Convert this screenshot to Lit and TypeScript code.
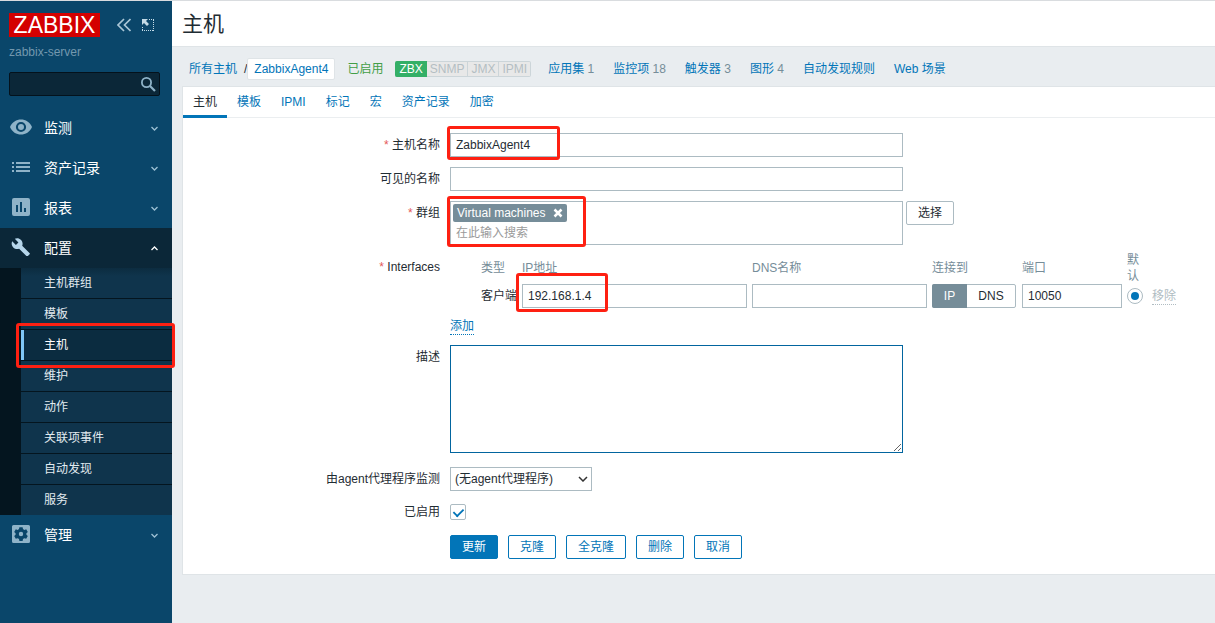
import { LitElement, html, css, svg, nothing } from "lit";
import { customElement, property } from "lit/decorators.js";
import { classMap } from "lit/directives/class-map.js";

const base = css`
  * {
    box-sizing: border-box;
  }
  a {
    color: #0275b8;
    text-decoration: none;
  }
  button,
  input,
  select,
  textarea {
    font: inherit;
    color: inherit;
    margin: 0;
  }
  ul {
    list-style: none;
    margin: 0;
    padding: 0;
  }
  .mark {
    position: absolute;
    border: 3px solid #fe2012;
    border-radius: 3px;
    pointer-events: none;
    z-index: 2;
  }
`;

const icons: Record<string, unknown> = {
  eye: svg`<path fill-rule="evenodd" d="M0 9C2 4 6.500 1.500 11 1.500S20 4 22 9C20 14 15.500 16.500 11 16.500S2 14 0 9zM11 3.900a5.100 5.100 0 1 0 0 10.200a5.100 5.100 0 1 0 0-10.200zM11 6a3 3 0 1 1 0 6a3 3 0 1 1 0-6z"/>`,
  list: svg`<path d="M2 4h2v2H2zM6 4h14v2H6zM2 8h2v2H2zM6 8h14v2H6zM2 12h2v2H2zM6 12h14v2H6z"/>`,
  chart: svg`<path fill-rule="evenodd" d="M4 0h14a2 2 0 0 1 2 2v14a2 2 0 0 1-2 2H4a2 2 0 0 1-2-2V2a2 2 0 0 1 2-2zM6 7v7h2V7zM10 4v10h2V4zM14 10v4h2v-4z"/>`,
  wrench: svg`<path d="M19.700 15.200l-7.500-7.500c.8-1.900.4-4.200-1.200-5.800C9.300.2 6.800-.1 4.800.8l3.600 3.600-2.500 2.500L2.200 3.300c-1 2-.6 4.500 1.100 6.200 1.600 1.600 3.900 2 5.800 1.200l7.500 7.500c.3.300.8.300 1.100 0l1.900-1.900c.4-.3.400-.8.100-1.100z"/>`,
  gear: svg`<path fill-rule="evenodd" d="M3.500 0h15A1.500 1.500 0 0 1 20 1.500v15a1.500 1.500 0 0 1-1.500 1.500h-15A1.500 1.500 0 0 1 2 16.500v-15A1.500 1.500 0 0 1 3.500 0zM9.400 2.200l-.4 1.900-1.300.8-1.900-.6-1.600 2.700 1.400 1.300v1.500l-1.400 1.300 1.600 2.700 1.900-.6 1.300.8.4 1.900h3.200l.4-1.900 1.300-.8 1.900.6 1.600-2.700-1.400-1.300V8.300l1.400-1.300-1.600-2.700-1.900.6-1.300-.8-.4-1.900zM11 6.800a2.200 2.200 0 1 1 0 4.400a2.200 2.200 0 1 1 0-4.400z"/>`,
};

interface Section {
  icon: string;
  label: string;
  items?: string[];
}

const sections: Section[] = [
  { icon: "eye", label: "监测" },
  { icon: "list", label: "资产记录" },
  { icon: "chart", label: "报表" },
  {
    icon: "wrench",
    label: "配置",
    items: ["主机群组", "模板", "主机", "维护", "动作", "关联项事件", "自动发现", "服务"],
  },
  { icon: "gear", label: "管理" },
];

@customElement("side-nav")
export class SideNav extends LitElement {
  @property() current = "主机";

  static styles = [
    base,
    css`
      :host {
        display: block;
        flex: none;
        width: 172px;
        background: #0a466a;
        color: #fff;
      }
      .head {
        display: flex;
        align-items: center;
        padding: 12px 0 0 9px;
      }
      .logo {
        width: 91px;
        height: 24px;
        margin-right: 17px;
        background: #d40000;
        color: #fff;
        font-size: 23px;
        line-height: 24px;
        text-align: center;
      }
      .tool {
        display: flex;
        border: 0;
        padding: 0;
        background: none;
        margin-right: 11px;
      }
      .server {
        margin: 6px 9px 0;
        line-height: 18px;
        color: #7398ae;
      }
      .search {
        display: flex;
        align-items: center;
        height: 24px;
        margin: 11px 12px 12px 9px;
        padding-right: 3px;
        border: 1px solid #04121c;
        border-radius: 2px;
        background: #0b2738;
      }
      .search input {
        flex: 1;
        min-width: 0;
        border: 0;
        outline: 0;
        background: none;
      }
      .search button {
        display: flex;
        padding: 0;
        border: 0;
        background: none;
      }
      .section {
        display: flex;
        align-items: center;
        height: 40px;
        padding: 0 14px 0 10px;
        color: #fff;
        font-size: 14px;
      }
      .icon {
        margin-bottom: 2px;
        fill: #8fb3c8;
      }
      .name {
        flex: 1;
        padding-left: 12px;
      }
      .arrow {
        fill: none;
        stroke: #9dc0d4;
      }
      .open {
        background: #0b2738;
      }
      .open .icon {
        fill: #b5d5ea;
      }
      .open .arrow {
        stroke: #fff;
      }
      .sub {
        padding-left: 21px;
        background: #04151f;
      }
      .sub li {
        position: relative;
      }
      .sub li + li {
        border-top: 1px solid #04151f;
      }
      .item {
        display: block;
        height: 30px;
        line-height: 30px;
        padding-left: 20px;
        border-left: 3px solid transparent;
        background: #0f344c;
        color: #e2ebf0;
      }
      .sub li:first-child .item {
        background: linear-gradient(#0c2c40, #0f344c 8px);
      }
      .item.current {
        border-left-color: #7fc6f5;
        background: #0b2c40;
        color: #fff;
      }
      .mark {
        inset: -7px -3px -8px -5px;
      }
    `,
  ];

  render() {
    return html`
      <div class="head">
        <a class="logo" href="#">ZABBIX</a>
        <button class="tool" aria-label="收起">
          <svg width="14" height="14" fill="none" stroke="#a9c6d6" stroke-width="1.700">
            <path d="M7 1L1 7l6 6M13.500 1l-6 6 6 6" />
          </svg>
        </button>
        <button class="tool" aria-label="隐藏">
          <svg width="12" height="12" fill="#c3dbe7">
            <path d="M0 0h6L4 2l3 3-2 2-3-3-2 2z" />
            <path
              fill="none"
              stroke="#c3dbe7"
              stroke-dasharray="1 1"
              d="M7 .5h5M11.500 1v11M11 11.500H0M.5 11V7"
            />
          </svg>
        </button>
      </div>
      <div class="server">zabbix-server</div>
      <form class="search" role="search">
        <input type="text" aria-label="搜索" />
        <button type="button" aria-label="搜索">
          <svg width="15" height="15" fill="none" stroke="#8fb3c8">
            <circle cx="5.500" cy="5.500" r="4.600" stroke-width="1.800" />
            <path d="M9 9l5 5" stroke-width="2.200" />
          </svg>
        </button>
      </form>
      <nav>
        ${sections.map(
          (s) => html`
            <a class=${classMap({ section: true, open: !!s.items })} href="#">
              <svg class="icon" width="22" height="18">${icons[s.icon]}</svg>
              <span class="name">${s.label}</span>
              <svg class="arrow" width="7" height="5" stroke-width="1.300">
                <path d=${s.items ? "M.5 4L3.500 1l3 3" : "M.5 1l3 3 3-3"} />
              </svg>
            </a>
            ${s.items
              ? html`<ul class="sub">
                  ${s.items.map((i) => {
                    const current = i === this.current;
                    return html`<li>
                      <a class=${classMap({ item: true, current })} href="#">${i}</a>
                      ${current ? html`<div class="mark"></div>` : nothing}
                    </li>`;
                  })}
                </ul>`
              : nothing}
          `,
        )}
      </nav>
    `;
  }
}

@customElement("host-form")
export class HostForm extends LitElement {
  static styles = [
    base,
    css`
      :host {
        display: block;
        border: 1px solid #dfe4e7;
        border-right: 0;
        background: #fff;
      }
      .tabs {
        display: flex;
        border-bottom: 1px solid #ebeef0;
      }
      .tabs a {
        height: 30px;
        padding: 0 10px;
        line-height: 30px;
      }
      .tabs .active {
        height: 31px;
        margin-bottom: -1px;
        border-bottom: 3px solid #0275b8;
        color: #1f2c33;
      }
      form {
        padding: 10px 0;
      }
      .row {
        display: grid;
        grid-template-columns: calc(25% - 1px) minmax(0, 1fr);
        column-gap: 10px;
        padding: 5px 0;
      }
      .label {
        line-height: 24px;
        text-align: right;
      }
      .required::before {
        content: "* ";
        color: #e45959;
      }
      .field {
        display: flex;
        gap: 3px;
        position: relative;
        align-items: flex-start;
      }
      .box {
        width: 100%;
        height: 24px;
        padding: 0 5px;
        border: 1px solid #acbbc2;
        border-radius: 0;
        background: #fff;
        outline: 0;
      }
      .wide {
        width: 453px;
      }
      .multi {
        height: 44px;
        padding: 2px;
      }
      .tag {
        display: inline-flex;
        align-items: center;
        gap: 7px;
        height: 18px;
        padding: 0 4px;
        border-radius: 2px;
        background: #768d99;
        color: #fff;
      }
      .tag button {
        display: flex;
        padding: 0;
        border: 0;
        background: none;
      }
      .multi input {
        display: block;
        width: 100%;
        height: 20px;
        padding: 2px 3px 0;
        border: 0;
        outline: 0;
      }
      ::placeholder {
        color: #9a9a9a;
        opacity: 1;
      }
      .btn {
        height: 24px;
        padding: 1px 11px 0;
        border: 1px solid #0275b8;
        border-radius: 2px;
        background: #fff;
        color: #0275b8;
        line-height: 21px;
      }
      .btn.plain {
        border-color: #acbbc2;
        color: #1f2c33;
      }
      .btn.primary {
        background: #0275b8;
        color: #fff;
      }
      .interfaces {
        padding: 0 0 5px;
      }
      .interfaces .label {
        padding-top: 5px;
      }
      .stack {
        position: relative;
      }
      table {
        table-layout: fixed;
        width: 727px;
        border-collapse: collapse;
      }
      .c-type {
        width: 72px;
      }
      .c-ip {
        width: 230px;
      }
      .c-dns {
        width: 180px;
      }
      .c-connect {
        width: 90px;
      }
      .c-port {
        width: 105px;
      }
      .c-small {
        width: 25px;
      }
      th {
        height: 34px;
        padding: 1px 5px 0 0;
        color: #768d99;
        font-weight: 400;
        line-height: 16px;
        text-align: left;
        white-space: nowrap;
      }
      td {
        padding: 0 5px 0 0;
        white-space: nowrap;
      }
      th:first-child,
      td:first-child {
        padding-right: 0;
        padding-left: 31px;
      }
      th.default {
        padding-right: 9px;
        white-space: normal;
      }
      td:last-child {
        padding: 0;
      }
      .segments {
        display: flex;
        width: 84px;
        height: 24px;
        border: 1px solid #acbbc2;
        border-radius: 2px;
        line-height: 22px;
        text-align: center;
      }
      .segments input {
        position: absolute;
        opacity: 0;
      }
      .segments label {
        flex: 0 0 35px;
        margin: -1px 0 -1px -1px;
        padding: 1px 0;
        border-radius: 2px 0 0 2px;
      }
      .segments label:last-child {
        flex: 1;
        margin-left: 0;
      }
      .segments input:checked + label {
        background: #768d99;
        color: #fff;
      }
      .round,
      .check {
        display: grid;
        place-items: center;
        appearance: none;
        width: 16px;
        height: 16px;
        border: 1px solid #acbbc2;
        background: #fff;
      }
      .round {
        border-radius: 50%;
      }
      .round:checked::after {
        content: "";
        width: 8px;
        height: 8px;
        border-radius: 50%;
        background: #0275b8;
      }
      .check {
        border-radius: 2px;
        margin-top: 3px;
      }
      .check:checked::after {
        content: "";
        width: 9px;
        height: 5px;
        margin-bottom: 2px;
        border: solid #0275b8;
        border-width: 0 0 2px 2px;
        transform: rotate(-45deg) scale(0.9);
      }
      .dotted {
        display: inline-block;
        border-bottom: 1px dotted currentColor;
        line-height: 16px;
      }
      .off {
        color: #b0bcc2;
      }
      .add {
        margin-top: 10px;
      }
      textarea {
        display: block;
        height: 108px;
        padding: 4px 5px;
        border: 1px solid #02659f;
        outline: 0;
        margin-bottom: 4px;
      }
      select {
        appearance: none;
        width: 142px;
        height: 24px;
        padding: 0 4px;
        border: 1px solid #acbbc2;
        border-radius: 0;
        background: #fff
          url("data:image/svg+xml,%3Csvg xmlns='http://www.w3.org/2000/svg' width='10' height='6' fill='none' stroke='%23333' stroke-width='1.5'%3E%3Cpath d='M1 1l4 4 4-4'/%3E%3C/svg%3E")
          no-repeat right 3px center;
      }
      .enabled .label {
        line-height: 22px;
      }
      .actions {
        padding-top: 7px;
      }
      .actions .field {
        gap: 10px;
      }
      .mark-name {
        inset: -7px auto auto -3px;
        width: 113px;
        height: 34px;
      }
      .mark-group {
        inset: -5px auto auto -3px;
        width: 139px;
        height: 51px;
      }
      .mark-ip {
        inset: 23px auto auto 66px;
        width: 92px;
        height: 39px;
      }
    `,
  ];

  render() {
    return html`
      <nav class="tabs">
        ${["主机", "模板", "IPMI", "标记", "宏", "资产记录", "加密"].map(
          (t, i) => html`<a class=${classMap({ active: i === 0 })} href="#">${t}</a>`,
        )}
      </nav>
      <form>
        <div class="row">
          <label class="label required" for="host">主机名称</label>
          <div class="field">
            <input class="box wide" id="host" type="text" .value=${"ZabbixAgent4"} />
            <div class="mark mark-name"></div>
          </div>
        </div>
        <div class="row">
          <label class="label" for="visible">可见的名称</label>
          <div class="field"><input class="box wide" id="visible" type="text" /></div>
        </div>
        <div class="row">
          <label class="label required" for="groups">群组</label>
          <div class="field">
            <div class="box wide multi">
              <span class="tag"
                >Virtual machines
                <button type="button" aria-label="移除">
                  <svg width="10" height="10" stroke="#fff" stroke-width="2.500">
                    <path d="M1.500 1.500l7 7M8.500 1.500l-7 7" />
                  </svg>
                </button>
              </span>
              <input id="groups" type="text" placeholder="在此输入搜索" />
            </div>
            <button class="btn plain" type="button">选择</button>
            <div class="mark mark-group"></div>
          </div>
        </div>
        <div class="row interfaces">
          <div class="label required">Interfaces</div>
          <div class="stack">
            <table>
              <colgroup>
                <col class="c-type" />
                <col class="c-ip" />
                <col class="c-dns" />
                <col class="c-connect" />
                <col class="c-port" />
                <col class="c-small" />
                <col class="c-small" />
              </colgroup>
              <thead>
                <tr>
                  <th>类型</th>
                  <th>IP地址</th>
                  <th>DNS名称</th>
                  <th>连接到</th>
                  <th>端口</th>
                  <th class="default">默认</th>
                  <th></th>
                </tr>
              </thead>
              <tbody>
                <tr>
                  <td>客户端</td>
                  <td><input class="box" type="text" aria-label="IP地址" .value=${"192.168.1.4"} /></td>
                  <td><input class="box" type="text" aria-label="DNS名称" /></td>
                  <td>
                    <div class="segments">
                      <input type="radio" name="useip" id="use-ip" checked />
                      <label for="use-ip">IP</label>
                      <input type="radio" name="useip" id="use-dns" />
                      <label for="use-dns">DNS</label>
                    </div>
                  </td>
                  <td><input class="box" type="text" aria-label="端口" .value=${"10050"} /></td>
                  <td><input class="round" type="radio" name="main" aria-label="默认" checked /></td>
                  <td><a class="dotted off" href="#">移除</a></td>
                </tr>
              </tbody>
            </table>
            <a class="dotted add" href="#">添加</a>
            <div class="mark mark-ip"></div>
          </div>
        </div>
        <div class="row">
          <label class="label" for="description">描述</label>
          <div class="field"><textarea class="wide" id="description"></textarea></div>
        </div>
        <div class="row">
          <label class="label" for="proxy">由agent代理程序监测</label>
          <div class="field">
            <select id="proxy">
              <option>(无agent代理程序)</option>
            </select>
          </div>
        </div>
        <div class="row enabled">
          <label class="label" for="status">已启用</label>
          <div class="field"><input class="check" id="status" type="checkbox" checked /></div>
        </div>
        <div class="row actions">
          <span></span>
          <div class="field">
            <button class="btn primary" type="button">更新</button>
            ${["克隆", "全克隆", "删除", "取消"].map(
              (b) => html`<button class="btn" type="button">${b}</button>`,
            )}
          </div>
        </div>
      </form>
    `;
  }
}

@customElement("app-root")
export class AppRoot extends LitElement {
  static styles = [
    base,
    css`
      :host {
        display: flex;
        box-sizing: border-box;
        min-height: 100vh;
        border-top: 1px solid #d9dcdf;
        background: #e9edf0;
        color: #1f2c33;
        font: 12px/18px "Liberation Sans", Arial, "Noto Sans CJK SC", sans-serif;
      }
      main {
        flex: 1;
        min-width: 0;
      }
      h1 {
        margin: 0;
        height: 46px;
        padding-left: 10px;
        border-bottom: 1px solid #dfe4e7;
        background: #fff;
        font-size: 21px;
        font-weight: 400;
        line-height: 45px;
      }
      .crumbs {
        display: flex;
        align-items: center;
        height: 39px;
        padding: 5px 0 0 17px;
        white-space: nowrap;
      }
      .slash {
        padding-left: 7px;
      }
      .here {
        height: 22px;
        padding: 0 6px;
        border: 1px solid #dfe4e7;
        border-radius: 2px;
        background: #fff;
        line-height: 20px;
      }
      .status {
        margin: 0 12px;
        color: #429e47;
      }
      .badges {
        display: flex;
        margin-right: 17px;
      }
      .badges li {
        height: 16px;
        padding: 0 3px;
        border: 1px solid #ccd5d9;
        border-left-width: 0;
        background: #e8e8e8;
        color: #b4bec3;
        line-height: 14px;
      }
      .badges .on {
        padding-left: 4px;
        border-color: #34af67;
        border-radius: 2px 0 0 2px;
        background: #34af67;
        color: #fff;
      }
      .badges li:last-child {
        border-radius: 0 2px 2px 0;
      }
      .links {
        display: flex;
        gap: 19px;
        color: #768d99;
      }
      .card {
        margin-left: 10px;
      }
    `,
  ];

  private links: [string, string?][] = [
    ["应用集", "1"],
    ["监控项", "18"],
    ["触发器", "3"],
    ["图形", "4"],
    ["自动发现规则"],
    ["Web 场景"],
  ];

  render() {
    return html`
      <side-nav></side-nav>
      <main>
        <h1>主机</h1>
        <div class="crumbs">
          <a href="#">所有主机</a>
          <span class="slash">/</span>
          <a class="here" href="#">ZabbixAgent4</a>
          <span class="status">已启用</span>
          <ul class="badges">
            <li class="on">ZBX</li>
            <li>SNMP</li>
            <li>JMX</li>
            <li>IPMI</li>
          </ul>
          <ul class="links">
            ${this.links.map(([t, n]) => html`<li><a href="#">${t}</a>${n ? ` ${n}` : nothing}</li>`)}
          </ul>
        </div>
        <host-form class="card"></host-form>
      </main>
    `;
  }
}
